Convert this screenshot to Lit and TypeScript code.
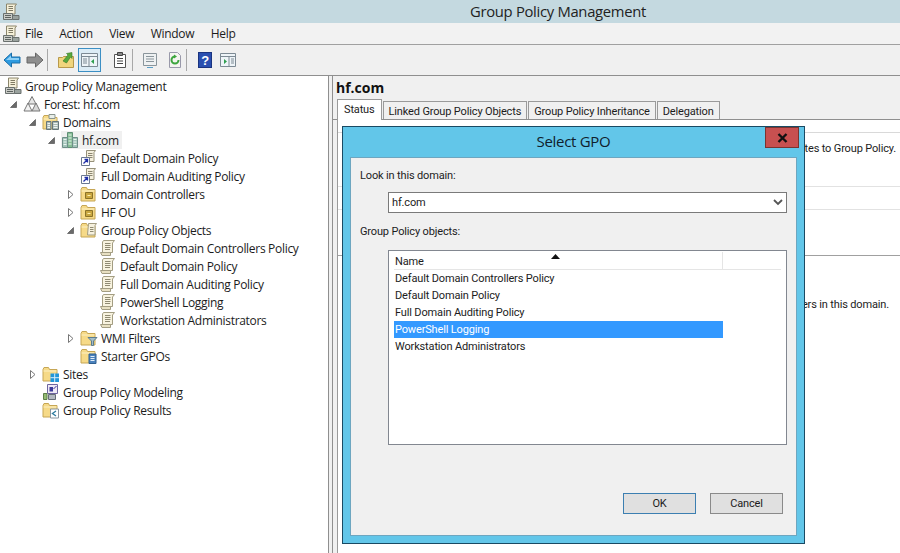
import { LitElement, html, css, svg } from "lit";
import { customElement } from "lit/decorators.js";

const scroll = svg`<path d="M4.500 1.500h11l-2 2.500v9.500H3.500V3z" fill="#f8f3df" stroke="#a39d82"/><path d="M1.500 13.500h10v3H3z" fill="#e8e0c2" stroke="#a39d82"/><path d="M6 4.500h5.500M6 6.500h5.500M6 8.500h5.500M6 10.500h5" stroke="#8f8a72"/>`;
const mgmt = svg`<path d="M4.500 1h10l-1.500 2v8H4.500z" fill="#f6f0d9" stroke="#8c866c"/><path d="M6.500 3.500h4.500M6.500 5.500h4.500M6.500 7.500h4.500" stroke="#7f7a64"/><path d="M1.500 10.500h9v6h-9z" fill="#c9cbc6" stroke="#6a706e"/><path d="M10.500 12.500h6.500v4h-6.500z" fill="#9aa29e" stroke="#6a706e"/><path d="M3 12.500h6M3 14.500h6" stroke="#5c625f"/>`;
const folder = (extra: unknown) => svg`<path d="M1 4.500l1-2h4.500l1 2H15v11.500H1z" fill="#f6da88" stroke="#c6a655"/><path d="M1.500 6h13" stroke="#fcf0c4"/>${extra}`;
const icons: Record<string, unknown> = {
  mgmt,
  forest: svg`<path d="M9 1.500L5 9h8z" fill="#e6e6e6" stroke="#777"/><path d="M5 8L1 16h8z" fill="#f2f2f2" stroke="#777"/><path d="M13 8L9 16h8z" fill="#d8d8d8" stroke="#777"/>`,
  domains: folder(svg`<path d="M7 1.500h6v4H7z" fill="#e8eee9" stroke="#8b958e"/><path d="M4.500 8.500h4.500v8H4.500zM10.500 8.500h6v8h-6z" fill="#a8b8b2" stroke="#66767a"/><path d="M5.500 10.500h2.500M5.500 12.500h2.500M5.500 14.500h2.500M11.500 10.500h4M11.500 12.500h4M11.500 14.500h4" stroke="#eef3f3"/>`),
  domain: svg`<path d="M6.500 1.500h5v15h-5z" fill="#86bd95" stroke="#5f8f75"/><path d="M1.500 6.500h5v10h-5zM11.500 6.500h5v10h-5z" fill="#a3c4b9" stroke="#6e8f88"/><path d="M2.500 8.500h3M2.500 11h3M2.500 13.500h3M7.500 4h3M7.500 7h3M7.500 10h3M7.500 13h3M12.500 8.500h3M12.500 11h3M12.500 13.500h3" stroke="#eaf4f0"/>`,
  link: svg`<path d="M6.500 1.500h9l-1.500 2v9H6.500z" fill="#f4efdd" stroke="#96917a"/><path d="M8 4.500h4.500M8 6.500h4.500M8 8.500h4.500" stroke="#8a8570"/><path d="M1.500 8.500h8v8h-8z" fill="#fff" stroke="#6a7891"/><path d="M3.500 14.500l3.500-3.500M4.500 10.500h3v3" stroke="#1f2fa8" fill="none" stroke-width="1.300"/>`,
  ou: folder(svg`<path d="M5.500 7.500h7v6h-7z" fill="#c9a63f" stroke="#8a7228"/><path d="M7.500 10.500h3" stroke="#fff2b0"/>`),
  gpos: folder(svg`<path d="M8.500 2.500h8l-1.500 2v9.500H7.500z" fill="#f6f1de" stroke="#a39d82"/><path d="M10 6.500h3.500M10 8.500h3.500M10 10.500h3.500" stroke="#8f8a72"/>`),
  scroll,
  wmi: folder(svg`<path d="M8 8.500h9l-3.500 3.500v4.500h-2V12z" fill="#a3bdc9" stroke="#5c7d8e"/>`),
  starter: folder(svg`<path d="M9 7h7v9.500H9z" fill="#4a82bd" stroke="#2f5f8f"/><path d="M10.500 9.500h4M10.500 11.500h4M10.500 13.500h4" stroke="#e2eef8"/>`),
  sites: folder(svg`<path d="M8.500 8.500h8.500v8.500H8.500z" fill="#2196d8"/><path d="M12.700 8.500v8.500M8.500 12.700h8.500" stroke="#d8eef9"/>`),
  modeling: svg`<path d="M5.500 1.500h10v9h-10z" fill="#efeaf6" stroke="#6d64a0"/><path d="M7.500 4h3.500v4.500H7.500z" fill="#3c3a9b"/><path d="M11.500 6l3-3" stroke="#3c3a9b"/><path d="M1.500 10.500h3.500v6H1.500z" fill="#94bb74" stroke="#5d7f48"/><path d="M6.500 11.500h7v5h-7z" fill="#b2b8c0" stroke="#666d77"/>`,
  results: folder(svg`<path d="M8.500 8h8v9h-8z" fill="#fff" stroke="#8a96a0"/><path d="M14 10l-3.500 2.500L14 15" fill="none" stroke="#2f7da0" stroke-width="1.400"/>`),
};
const ico = (k: string) => html`<svg class="ico" viewBox="0 0 18 18" width="18" height="18">${icons[k]}</svg>`;

type Row = [number, string, string, "open" | "closed" | "", string?];
const rows: Row[] = [
  [0, "mgmt", "Group Policy Management", ""],
  [1, "forest", "Forest: hf.com", "open"],
  [2, "domains", "Domains", "open"],
  [3, "domain", "hf.com", "open", "sel"],
  [4, "link", "Default Domain Policy", ""],
  [4, "link", "Full Domain Auditing Policy", ""],
  [4, "ou", "Domain Controllers", "closed"],
  [4, "ou", "HF OU", "closed"],
  [4, "gpos", "Group Policy Objects", "open"],
  [5, "scroll", "Default Domain Controllers Policy", ""],
  [5, "scroll", "Default Domain Policy", ""],
  [5, "scroll", "Full Domain Auditing Policy", ""],
  [5, "scroll", "PowerShell Logging", ""],
  [5, "scroll", "Workstation Administrators", ""],
  [4, "wmi", "WMI Filters", "closed"],
  [4, "starter", "Starter GPOs", ""],
  [2, "sites", "Sites", "closed"],
  [2, "modeling", "Group Policy Modeling", ""],
  [2, "results", "Group Policy Results", ""],
];

@customElement("app-root")
export class AppRoot extends LitElement {
  static styles = css`
    :host { display: block; width: 900px; height: 553px; overflow: hidden; position: relative; background: #f0f0f0;
      font-family: "Open Sans", "Noto Sans", sans-serif; font-size: 12px; letter-spacing: -0.3px; color: #1c1c1c; }
    * { box-sizing: border-box; }
    .title { height: 23px; background: #c4d9e0; display: flex; align-items: center; padding-left: 2px; }
    .title .cap { flex: 1; text-align: center; font-size: 14.800px; color: #222; padding: 0 0 2px 193px; }
    .menu { height: 22px; background: #f2f2f2; display: flex; align-items: center; border-bottom: 1px solid #a0a0a0; padding-left: 2px; }
    .menu span { margin-right: 16.500px; }
    .menu .ico { margin-right: 5px; }
    .tools { height: 31px; background: #f0f0f0; border-bottom: 1px solid #8f8f8f; display: flex; align-items: center; padding-left: 1px; }
    .tb { width: 22px; height: 22px; display: flex; align-items: center; justify-content: center; flex: none; }
    .tb.active { width: 23px; height: 24px; margin-left: 1px; border: 1px solid #3c8fc4; background: #dcecf6; }
    .tb.m1 { margin-left: 1px; }
    .tb.m3 { margin-left: 3px; }
    .tb.m8 { margin-left: 8px; }
    .tb.help { width: 18px; }
    .sep { width: 1px; height: 22px; background: #a8a8a8; flex: none; }
    .sep.s1 { margin: 0 7px 0 1px; }
    .sep.s2 { margin: 0 6px 0 1px; }
    .sep.s3 { margin: 0 9px 0 0; }
    .main { display: flex; height: 477px; }
    .left { width: 329px; background: #fff; border-right: 1px solid #8f8f8f; padding-top: 1px; flex: none; }
    .row { height: 18px; display: flex; align-items: center; white-space: nowrap; }
    .arrow { width: 9px; height: 9px; flex: none; margin-right: 5px; }
    .ico { flex: none; margin-right: 3px; }
    .lbl { padding: 0 3px 0 0; }
    .row.sel .hl { display: flex; align-items: center; background: #f0f0f0; height: 18px; }
    .right { flex: 1; margin-left: 3px; border-left: 1px solid #8f8f8f; background: #f0f0f0; display: flex; flex-direction: column; font-family: Roboto, "Open Sans", sans-serif; font-size: 11px; letter-spacing: -0.15px; }
    .head { height: 23px; padding: 3px 0 0 3px; font-family: "Open Sans", sans-serif; font-weight: 700; font-size: 14px; letter-spacing: 0; color: #111; line-height: 18px; }
    .tabs { display: flex; height: 21px; padding-left: 4px; align-items: flex-end; border-bottom: 1px solid #8f8f8f; }
    .tab { height: 18px; border: 1px solid #9a9a9a; border-bottom: none; padding: 0 5px; margin-right: 1px; line-height: 19px; background: #f0f0f0; white-space: nowrap; }
    .tab.on { height: 21px; margin-bottom: -1px; background: #fff; padding: 0 6px; line-height: 20px; position: relative; }
    .pane { flex: 1; margin-left: 4px; background: #fff; border-left: 1px solid #9a9a9a; display: flex; flex-direction: column; }
    .pline { border-bottom: 1px solid #d9d9d9; }
    .pline.a { height: 13px; }
    .ptext { height: 54px; border-bottom: 1px solid #e2e2e2; text-align: right; padding: 9px 4px 0 0; white-space: nowrap; }
    .pgap { height: 23px; border-bottom: 1px solid #e2e2e2; }
    .pdark { height: 46px; border-bottom: 1px solid #a0a0a0; }
    .ptext2 { text-align: right; padding: 42px 11px 0 0; white-space: nowrap; }
    .dlg { position: absolute; left: 342px; top: 126px; width: 463px; height: 418px; background: #62c6e9; border: 1px solid #1a4a63; padding: 0 7px 7px; display: flex; flex-direction: column; font-family: Roboto, "Open Sans", sans-serif; font-size: 11px; letter-spacing: -0.15px; }
    .dcap { height: 30px; padding-bottom: 2px; display: flex; align-items: center; justify-content: center; font-family: "Open Sans", sans-serif; letter-spacing: -0.3px; font-size: 15px; color: #10202c; flex: none; }
    .close { position: absolute; right: 5px; top: 0; width: 34px; height: 21px; background: #c75050; border: 1px solid #7a3430; display: flex; align-items: center; justify-content: center; }
    .body { flex: 1; background: #f0f0f0; border: 1px solid #6da6c0; padding: 9px 9px 21px 10px; display: flex; flex-direction: column; }
    .dlbl { height: 17px; line-height: 17px; margin-left: -1px; }
    .dlbl.g2 { margin-top: 10px; }
    .combo { margin: 8px 0 0 27px; height: 21px; background: #fff; border: 1px solid #7a7a7a; display: flex; align-items: center; justify-content: space-between; padding: 0 3px 1px 3px; }
    .combo svg { margin-top: 1px; }
    .list { margin: 10px 0 0 27px; height: 195px; background: #fff; border: 1px solid #828790; padding: 1px 0 0 5px; position: relative; display: flex; flex-direction: column; }
    .lhead { height: 18px; display: flex; border-bottom: 1px solid #e5e5e5; margin-right: 5px; flex: none; }
    .lhead .c1 { width: 329px; padding-left: 1px; border-right: 1px solid #e5e5e5; line-height: 20px; }
    .sort { position: absolute; left: 162px; top: 3px; }
    .item { width: 329px; height: 17px; line-height: 17px; padding-left: 1px; flex: none; }
    .item.on { background: #3399ff; color: #fff; }
    .btns { margin-top: auto; display: flex; justify-content: flex-end; gap: 14px; margin-right: 4px; }
    .btn { width: 73px; height: 21px; background: #e0e0e0; border: 1px solid #8a8a8a; text-align: center; line-height: 20px; }
    .btn.def { border-color: #3c7fb1; }
  `;

  arrow(kind: string) {
    if (kind === "open") return html`<svg class="arrow" viewBox="0 0 9 9"><path d="M7.500 1.500v6h-6z" fill="#6a6a6a" stroke="#444" stroke-width=".6"/></svg>`;
    if (kind === "closed") return html`<svg class="arrow" viewBox="0 0 9 9"><path d="M2.500.5l4.500 4-4.500 4z" fill="#fff" stroke="#777"/></svg>`;
    return html`<span class="arrow"></span>`;
  }

  render() {
    return html`
      <div class="title">${ico("mgmt")}<div class="cap">Group Policy Management</div></div>
      <div class="menu">
        ${ico("mgmt")}
        <span>File</span><span>Action</span><span>View</span><span>Window</span><span>Help</span>
      </div>
      <div class="tools">
        <div class="tb"><svg width="18" height="16" viewBox="0 0 18 16"><path d="M8.500 1L1 8l7.500 7v-4H17V5H8.500z" fill="#2e9be0" stroke="#1c6ea8"/><path d="M8 3.500L3 8h13V6H8z" fill="#8fd0f5"/></svg></div>
        <div class="tb m1"><svg width="18" height="16" viewBox="0 0 18 16"><path d="M9.500 1L17 8l-7.500 7v-4H1V5h8.500z" fill="#8e8e8e" stroke="#666"/></svg></div>
        <div class="sep s1"></div>
        <div class="tb"><svg width="18" height="18" viewBox="0 0 18 18"><path d="M1.500 6.500h4l1-1h10v11h-15z" fill="#f1d57d" stroke="#b8994a"/><path d="M6 10l5-6-1.500-1.500L15 1.500v6l-1.500-1.500-4 6z" fill="#58a83c" stroke="#37782a" stroke-width=".6"/></svg></div>
        <div class="tb active"><svg width="19" height="16" viewBox="0 0 19 16"><path d="M1.500 1.500h16v13h-16z" fill="#eef4f8" stroke="#7d8a94"/><path d="M1.500 4.500h16M9 4.500v10" stroke="#7d8a94"/><path d="M3 7h4M3 9h4M3 11h4" stroke="#7d8a94"/><path d="M14 7v5l-3-2.500z" fill="#2f9e4f"/></svg></div>
        <div class="tb m8"><svg width="16" height="18" viewBox="0 0 16 18"><path d="M2.500 3.500h11v13h-11z" fill="#fff" stroke="#555"/><path d="M5.500 1.500h5v3h-5z" fill="#888" stroke="#444"/><path d="M5 7.500h6M5 10h6M5 12.500h6" stroke="#444"/></svg></div>
        <div class="sep s2"></div>
        <div class="tb"><svg width="16" height="17" viewBox="0 0 16 17"><path d="M1.500 1.500h13v12h-13z" fill="#eef1f2" stroke="#8a959b"/><path d="M4 4.500h8M4 7h8M4 9.500h8" stroke="#8a959b"/><path d="M5 15.500h6" stroke="#5a9fc8"/></svg></div>
        <div class="tb m3"><svg width="16" height="18" viewBox="0 0 16 18"><path d="M2.500 1.500h8l3 3v12h-11z" fill="#f5f5f0" stroke="#99a"/><path d="M11.500 9A3.500 3.500 0 1 1 8 5.500" fill="none" stroke="#3da63d" stroke-width="2"/><path d="M7 3.500l3 2-3 2z" fill="#3da63d"/></svg></div>
        <div class="sep s3"></div>
        <div class="tb help"><svg width="16" height="18" viewBox="0 0 16 18"><rect x="1.500" y="1.500" width="13" height="15" fill="#2a4fb0" stroke="#1b3480"/><text x="8" y="14" text-anchor="middle" font-size="13" font-weight="700" font-family="Liberation Sans" fill="#fff">?</text></svg></div>
        <div class="tb m3"><svg width="18" height="16" viewBox="0 0 18 16"><path d="M1.500 1.500h15v13h-15z" fill="#eef4f8" stroke="#7d8a94"/><path d="M1.500 4.500h15M10 4.500v10" stroke="#7d8a94"/><path d="M12 7h3M12 9h3M12 11h3" stroke="#7d8a94"/><path d="M5 7v5l3-2.500z" fill="#2f9e4f"/></svg></div>
      </div>
      <div class="main">
        <div class="left">
          ${rows.map((r) => {
            const pad = r[0] === 0 ? 4 : (r[0] - 1) * 19 + 9;
            const inner = html`${ico(r[1])}<span class="lbl">${r[2]}</span>`;
            return html`<div class="row ${r[4] ?? ""}" style="padding-left:${pad}px">
              ${r[0] === 0 ? "" : this.arrow(r[3])}
              ${r[4] ? html`<span class="hl">${inner}</span>` : inner}
            </div>`;
          })}
        </div>
        <div class="right">
          <div class="head">hf.com</div>
          <div class="tabs">
            <div class="tab on">Status</div>
            <div class="tab">Linked Group Policy Objects</div>
            <div class="tab">Group Policy Inheritance</div>
            <div class="tab">Delegation</div>
          </div>
          <div class="pane">
            <div class="pline a"></div>
            <div class="ptext">This domain's links to sites to Group Policy.</div>
            <div class="pgap"></div>
            <div class="pdark"></div>
            <div class="ptext2">Shows status of domain controllers in this domain.</div>
          </div>
        </div>
      </div>
      <div class="dlg">
        <div class="dcap">Select GPO</div>
        <div class="close"><svg width="11" height="10" viewBox="0 0 11 10"><path d="M1.500 1l8 8M9.500 1l-8 8" stroke="#111" stroke-width="2.400"/></svg></div>
        <div class="body">
          <div class="dlbl">Look in this domain:</div>
          <div class="combo"><span>hf.com</span><svg width="10" height="7" viewBox="0 0 10 7"><path d="M1 1l4 4 4-4" fill="none" stroke="#555" stroke-width="1.800"/></svg></div>
          <div class="dlbl g2">Group Policy objects:</div>
          <div class="list">
            <svg class="sort" width="9" height="5" viewBox="0 0 9 5"><path d="M4.500 0L9 5H0z" fill="#111"/></svg>
            <div class="lhead"><div class="c1">Name</div></div>
            <div class="item">Default Domain Controllers Policy</div>
            <div class="item">Default Domain Policy</div>
            <div class="item">Full Domain Auditing Policy</div>
            <div class="item on">PowerShell Logging</div>
            <div class="item">Workstation Administrators</div>
          </div>
          <div class="btns"><div class="btn def">OK</div><div class="btn">Cancel</div></div>
        </div>
      </div>
    `;
  }
}
